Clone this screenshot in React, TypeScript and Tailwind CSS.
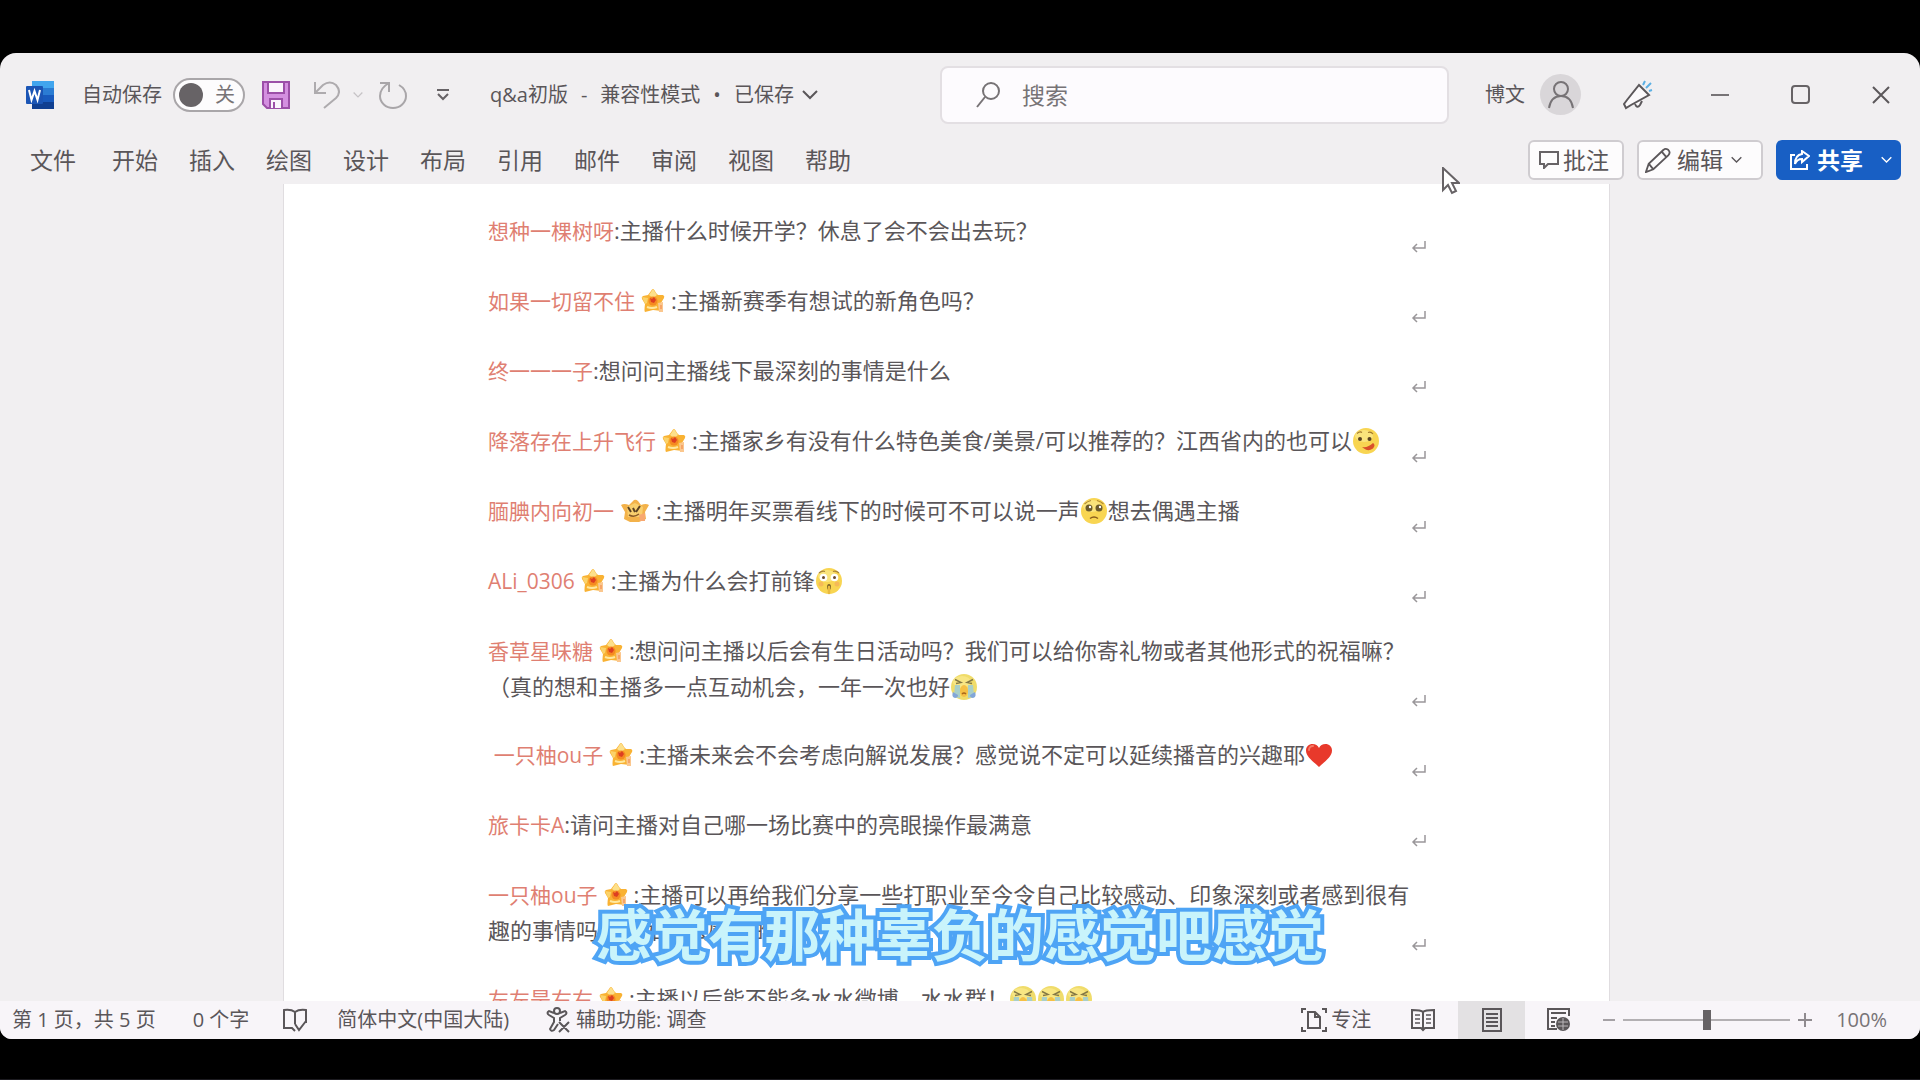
import type { ReactNode } from 'react'

type Face = 'lick' | 'plead' | 'hush' | 'sob' | 'heart'

type Question = {
  name: string
  badge?: 'star' | 'bear'
  lines: ReactNode[]
  indent?: boolean
}

const tabs = ['开始', '插入', '绘图', '设计', '布局', '引用', '邮件', '审阅', '视图', '帮助']

function Emoji({ face }: { face: Face }) {
  if (face === 'heart') {
    return (
      <svg viewBox="0 0 28 28" className="inline-block w-7 h-7 align-middle -mt-1" aria-hidden="true">
        <path d="M14 26C9 21 1 16 1 9.500C1 5.500 4 3 7.500 3C10.500 3 12.800 4.500 14 7C15.200 4.500 17.500 3 20.500 3C24 3 27 5.500 27 9.500C27 16 19 21 14 26Z" fill="#e8392b" />
        <path d="M4 9C4 6.500 6 5 8 5" stroke="#f47a66" strokeWidth="2" fill="none" strokeLinecap="round" />
      </svg>
    )
  }
  return (
    <svg viewBox="0 0 28 28" className="inline-block w-7 h-7 align-middle -mt-1" aria-hidden="true">
      <circle cx="14" cy="14" r="13" fill={face === 'sob' ? '#f0dc6a' : '#f8d552'} />
      <ellipse cx="12" cy="9" rx="9" ry="6" fill="#fbe98f" opacity="0.7" />
      {face === 'lick' && (
        <>
          <circle cx="8" cy="12" r="2" fill="#5a4322" />
          <circle cx="17.500" cy="12" r="2" fill="#5a4322" />
          <path d="M5 6.500Q8 4 10 5.500M16 5.500Q19 4.500 21 7" stroke="#a47a2c" strokeWidth="1.200" fill="none" />
          <path d="M10 20Q16 21 21 16Q24 18 21 21.500Q16 25 12 21.500Z" fill="#d9502a" />
        </>
      )}
      {face === 'plead' && (
        <>
          <path d="M4.500 7Q7 4.500 11 3.500M17 3.500Q21 4.500 23.500 7" stroke="#b08a35" strokeWidth="1.200" fill="none" />
          <circle cx="9" cy="11" r="3.500" fill="#6b5a2c" />
          <circle cx="19" cy="11" r="3.500" fill="#6b5a2c" />
          <circle cx="10" cy="10" r="1.200" fill="#fff" />
          <circle cx="20" cy="10" r="1.200" fill="#fff" />
          <path d="M10 21.500Q14 18.500 18 21.500" stroke="#8a5e1d" strokeWidth="1.500" fill="none" />
        </>
      )}
      {face === 'hush' && (
        <>
          <path d="M4 6Q7 3.500 10 4.500M18 4.500Q21 3.500 24 6" stroke="#a8843a" strokeWidth="1.200" fill="none" />
          <circle cx="8.500" cy="10.500" r="3.800" fill="#fff" />
          <circle cx="19.500" cy="10.500" r="3.800" fill="#fff" />
          <circle cx="8.500" cy="10.500" r="1.500" fill="#6b4a2a" />
          <circle cx="19.500" cy="10.500" r="1.500" fill="#6b4a2a" />
          <circle cx="6" cy="17" r="2.500" fill="#f4a65c" opacity="0.6" />
          <circle cx="22" cy="17" r="2.500" fill="#f4a65c" opacity="0.6" />
          <ellipse cx="14" cy="20" rx="2" ry="3" fill="#7c6428" />
          <path d="M14 20V26" stroke="#e9b93f" strokeWidth="2.500" strokeLinecap="round" />
        </>
      )}
      {face === 'sob' && (
        <>
          <path d="M5 6.500L11 9.500L6 10.500M23 6.500L17 9.500L22 10.500" stroke="#857945" strokeWidth="1.400" fill="none" />
          <path d="M5 12H10V25Q6 25 4 22Z" fill="#a9cfc8" />
          <path d="M23 12H18V25Q22 25 24 22Z" fill="#a9cfc8" />
          <path d="M3 19Q1 24 5 25Q8 25 8 22ZM25 19Q27 24 23 25Q20 25 20 22Z" fill="#82a6d8" />
          <ellipse cx="14" cy="18" rx="4" ry="6" fill="#f6c044" />
          <path d="M12 21Q14 19 16 21" stroke="#a9661c" strokeWidth="1.500" fill="none" />
        </>
      )}
    </svg>
  )
}

function Badge({ kind }: { kind: 'star' | 'bear' }) {
  if (kind === 'bear') {
    return (
      <svg viewBox="0 0 30 24" className="inline-block w-[30px] h-6 mx-1.5 align-middle -mt-1" aria-hidden="true">
        <path d="M1 6Q4 4 9 6L14 1Q16 0 18 2L21 6Q26 4 29 6L25 13L26 20L19 23H10L4 20L5 13Z" fill="#f3b24a" />
        <path d="M7 8L15 4L23 8L22 18H8Z" fill="#f9cf6d" />
        <path d="M8 8L11 13M13 9L15 13M20 7L16 13" stroke="#5c4223" strokeWidth="2" />
        <path d="M9 16Q14 19 19 15" stroke="#8a5a26" strokeWidth="1.500" fill="none" />
        <path d="M19 16L25 14V22L20 22Z" fill="#f8a870" />
      </svg>
    )
  }
  return (
    <svg viewBox="0 0 24 24" className="inline-block w-6 h-6 mx-1.5 align-middle -mt-1" aria-hidden="true">
      <path d="M12 0Q13 0 15 4L17 6L22 6Q24 7 23 9L20 14L21 22L12 21L4 23Q3 22 4 15L1 10Q0 8 2 7L7 6L10 2Q11 0 12 0Z" fill="#f9b233" />
      <path d="M12 0L16 6L12 9L8 6Z" fill="#fde08a" />
      <path d="M1 8L7 9L6 14L4 15Z" fill="#fbd26a" />
      <circle cx="12" cy="12" r="4.500" fill="#f58a22" />
      <path d="M9 9L11 10L13 8L15 11L13 14L10 13Z" fill="#dd3f22" />
      <path d="M6 18Q11 20 16 18" stroke="#ffe9a0" strokeWidth="2" fill="none" />
      <path d="M17 14L22 13V23H18Z" fill="#fbc78e" />
      <path d="M20 16V20" stroke="#f59a5b" strokeWidth="1.500" />
    </svg>
  )
}

const questions: Question[] = [
  { name: '想种一棵树呀', lines: ['主播什么时候开学？休息了会不会出去玩？'] },
  { name: '如果一切留不住', badge: 'star', lines: ['主播新赛季有想试的新角色吗？'] },
  { name: '终一一一子', lines: ['想问问主播线下最深刻的事情是什么'] },
  {
    name: '降落存在上升飞行',
    badge: 'star',
    lines: [<>主播家乡有没有什么特色美食/美景/可以推荐的？江西省内的也可以<Emoji face="lick" /></>],
  },
  {
    name: '腼腆内向初一',
    badge: 'bear',
    lines: [<>主播明年买票看线下的时候可不可以说一声<Emoji face="plead" />想去偶遇主播</>],
  },
  { name: 'ALi_0306', badge: 'star', lines: [<>主播为什么会打前锋<Emoji face="hush" /></>] },
  {
    name: '香草星味糖',
    badge: 'star',
    lines: [
      '想问问主播以后会有生日活动吗？我们可以给你寄礼物或者其他形式的祝福嘛？',
      <>（真的想和主播多一点互动机会，一年一次也好<Emoji face="sob" /></>,
    ],
  },
  {
    name: '一只柚ou子',
    badge: 'star',
    indent: true,
    lines: [<>主播未来会不会考虑向解说发展？感觉说不定可以延续播音的兴趣耶<Emoji face="heart" /></>],
  },
  { name: '旅卡卡A', lines: ['请问主播对自己哪一场比赛中的亮眼操作最满意'] },
  {
    name: '一只柚ou子',
    badge: 'star',
    lines: [
      '主播可以再给我们分享一些打职业至今令自己比较感动、印象深刻或者感到很有',
      '趣的事情吗？比如什么感动的人',
    ],
  },
  {
    name: '左左是右右',
    badge: 'star',
    lines: [
      <>主播以后能不能多水水微博、水水群！<Emoji face="sob" /><Emoji face="sob" /><Emoji face="sob" /></>,
    ],
  },
]

function Chevron({ className }: { className: string }) {
  return (
    <svg viewBox="0 0 16 10" className={className} fill="none" stroke="currentColor" strokeWidth="2" aria-hidden="true">
      <path d="M1 1L8 8L15 1" />
    </svg>
  )
}

function TitleBar() {
  return (
    <header className="flex items-center h-[83px] shrink-0 text-xl leading-7">
      <div className="flex items-center w-[940px] shrink-0 pl-[26px]">
        <svg viewBox="0 0 28 28" className="w-7 h-7" aria-label="Word" role="img">
          <path d="M6 0H28V8H6Z" fill="#41a5ee" />
          <path d="M6 7H28V14H6Z" fill="#2b7cd3" />
          <path d="M6 14H28V21H6Z" fill="#185abd" />
          <path d="M6 21H28V28H6Z" fill="#103f91" />
          <rect x="0" y="5" width="17" height="18" rx="1" fill="#1b55b5" />
          <path d="M3 9L5.500 19L8.500 10L11.500 19L14 9" fill="none" stroke="#fff" strokeWidth="2" />
        </svg>
        <label className="flex items-center ml-7">
          自动保存
          <input type="checkbox" className="sr-only" />
          <span className="flex items-center justify-between w-[72px] h-[34px] ml-[11px] pl-1 pr-2 rounded-full border-2 border-[#a9a6a9] bg-[#fdfcfd]">
            <span className="w-6 h-6 rounded-full bg-[#676366]" />
            <span className="text-[#777376]">关</span>
          </span>
        </label>
        <button className="ml-[17px]" aria-label="保存">
          <svg viewBox="0 0 28 28" className="w-7 h-7" fill="#d48fe0" stroke="#9c4fa8" strokeWidth="2">
            <path d="M1 1H27V27H5L1 23Z" />
            <path d="M6 1H22V12H6Z" fill="#fbf4fc" />
            <path d="M8 27V18H20V27" fill="#fbf4fc" />
            <path d="M12 27V21" />
          </svg>
        </button>
        <button className="ml-6 text-[#aeabae]" aria-label="撤消">
          <svg viewBox="0 0 26 28" className="w-[26px] h-7" fill="none" stroke="currentColor" strokeWidth="2">
            <path d="M1 1V12H12M1 12L9 4Q16 -1 22 4Q28 11 22 17L10 27" />
          </svg>
        </button>
        <button className="ml-[13px] text-[#c6c3c6]" aria-label="撤消选项">
          <Chevron className="w-2.5 h-2" />
        </button>
        <button className="ml-4 text-[#a9a6a9]" aria-label="重复">
          <svg viewBox="0 0 28 28" className="w-7 h-7" fill="none" stroke="currentColor" strokeWidth="2">
            <path d="M1 2H10V11M10 2Q1 7 1 15A13 12 0 0 0 27 15Q27 8 20 4" />
          </svg>
        </button>
        <button className="ml-[29px] text-[#676366]" aria-label="自定义快速访问工具栏">
          <svg viewBox="0 0 14 12" className="w-3.5 h-3" fill="none" stroke="currentColor" strokeWidth="2">
            <path d="M1 1H13M2 5L7 10L12 5" />
          </svg>
        </button>
        <button className="flex items-center gap-[13px] ml-10">
          <span>q&amp;a初版</span>
          <span>-</span>
          <span>兼容性模式</span>
          <span>•</span>
          <span className="flex items-center gap-2">已保存 <Chevron className="w-4 h-2.5" /></span>
        </button>
      </div>
      <label className="flex flex-1 items-center h-[58px] pl-[34px] rounded-lg border-2 border-[#e3dfe3] bg-[#fdfbfe] text-[#777376]">
        <svg viewBox="0 0 24 26" className="w-6 h-[26px] shrink-0" fill="none" stroke="currentColor" strokeWidth="2">
          <circle cx="15" cy="9" r="8" />
          <path d="M9 15L1 25" />
        </svg>
        <input
          type="text"
          placeholder="搜索"
          aria-label="搜索"
          className="flex-1 min-w-0 ml-[22px] text-[23px] bg-transparent outline-none placeholder:text-[#777376]"
        />
      </label>
      <div className="flex items-center justify-between w-[471px] shrink-0 pl-9 pr-[30px]">
        <button className="flex items-center gap-[15px]">
          博文
          <span className="flex justify-center items-center w-[41px] h-[41px] rounded-full bg-[#d9d6d9]">
            <svg viewBox="0 0 26 28" className="w-[26px] h-7" fill="none" stroke="#777376" strokeWidth="2">
              <circle cx="13" cy="8" r="7" />
              <path d="M1 27Q3 15 13 15Q23 15 25 27" />
            </svg>
          </span>
        </button>
        <button aria-label="即将推出的功能">
          <svg viewBox="0 0 30 30" className="w-[30px] h-[30px]" fill="#fbf9fb" stroke="#5b575a" strokeWidth="2">
            <path d="M12 24Q14 29 17 25L19 21" />
            <path d="M16 5L26 15L8 25L3 28L1 24L4 20Z" />
            <path d="M20 5L22 1M23 8L28 3M26 11L29 10" stroke="#5cb0e4" />
          </svg>
        </button>
        <span className="flex items-center gap-[62px] pl-4">
          <button aria-label="最小化" className="w-[18px] h-5 flex items-center">
            <span className="w-full border-t-2 border-[#777376]" />
          </button>
          <button aria-label="最大化" className="w-[19px] h-[19px] rounded-sm border-2 border-[#676366]" />
          <button aria-label="关闭">
            <svg viewBox="0 0 18 18" className="w-[18px] h-[18px]" stroke="#5b575a" strokeWidth="2">
              <path d="M1 1L17 17M17 1L1 17" />
            </svg>
          </button>
        </span>
      </div>
    </header>
  )
}

function Ribbon() {
  return (
    <nav className="flex items-center justify-between h-12 shrink-0 pl-[30px] pr-[19px] text-[23px] leading-8">
      <div className="flex items-center gap-[31px]">
        <button className="mr-[5px]">文件</button>
        {tabs.map((tab) => (
          <button key={tab}>{tab}</button>
        ))}
      </div>
      <div className="flex items-center gap-[13px]">
        <button className="flex items-center gap-1 w-24 h-10 pl-[9px] rounded-md border-2 border-[#cfccd0] bg-[#fdfcfd]">
          <svg viewBox="0 0 20 18" className="w-5 h-[18px]" fill="none" stroke="#676366" strokeWidth="2">
            <path d="M1 1H19V13H9L5 17V13H1Z" />
          </svg>
          批注
        </button>
        <button className="flex items-center gap-1.5 w-[126px] h-10 pl-1.5 rounded-md border-2 border-[#cfccd0] bg-[#fdfcfd]">
          <svg viewBox="0 0 28 28" className="w-[26px] h-[26px]" fill="none" stroke="#5b575a" strokeWidth="2">
            <path d="M1 27L4 18L20 3Q22 1 25 3Q28 6 25 9L9 24ZM4 18L9 24M18 5L23 11" />
          </svg>
          编辑
          <Chevron className="w-[11px] h-2 ml-0.5" />
        </button>
        <button className="flex items-center w-[125px] h-10 pl-3.5 rounded-md bg-[#185fc4] text-white font-bold">
          <svg viewBox="0 0 20 20" className="w-5 h-5" fill="none" stroke="currentColor" strokeWidth="2">
            <path d="M5 5H1V19H17V14" />
            <path d="M12 1L19 6L12 12V9Q7 9 5 14Q5 5 12 4Z" />
          </svg>
          <span className="ml-[7px]">共享</span>
          <Chevron className="w-[11px] h-2 ml-[18px]" />
        </button>
      </div>
    </nav>
  )
}

function Row({ question }: { question: Question }) {
  const { name, badge, lines, indent } = question
  return (
    <div className={`flex ${lines.length > 1 ? 'h-[104px]' : 'h-[70px]'}`}>
      <div className="flex-1 min-w-0 whitespace-nowrap">
        {lines.map((line, index) => (
          <p key={index} className="h-9">
            {index === 0 && (
              <>
                {indent && <>&nbsp;</>}
                <span className="text-[21px] text-[#df7f72]">{name}</span>
                {badge && <Badge kind={badge} />}:
              </>
            )}
            {line}
          </p>
        ))}
      </div>
      <svg viewBox="0 0 16 14" className="w-4 h-3.5 mb-7 self-end shrink-0" fill="none" stroke="#9a979a" strokeWidth="1.500" aria-hidden="true">
        <path d="M14 1V8H2M6 4L2 8L6 12" />
      </svg>
    </div>
  )
}

function StatusBar() {
  return (
    <footer className="flex items-center justify-between h-[38px] shrink-0 pl-3 pr-[33px] bg-[#f8f5f9] text-xl leading-7">
      <div className="flex items-center">
        <span>第 1 页，共 5 页</span>
        <span className="ml-[37px]">0 个字</span>
        <svg viewBox="0 0 24 24" className="w-6 h-6 ml-[34px]" fill="none" stroke="currentColor" strokeWidth="2" aria-hidden="true">
          <path d="M12 4Q8 1 1 2V20H9L12 23M12 4Q16 1 23 2V15M12 4V16M12 16L16 22L23 13" />
        </svg>
        <span className="ml-[30px]">简体中文(中国大陆)</span>
        <button className="flex items-center gap-1.5 ml-[37px]">
          <svg viewBox="0 0 24 26" className="w-6 h-[26px]" fill="none" stroke="currentColor" strokeWidth="2" aria-hidden="true">
            <circle cx="11" cy="4" r="3" />
            <path d="M8 6L3 4Q0 6 3 8L8 11V15L4 22Q5 25 8 23L12 17M14 6L19 4Q22 6 19 8L14 11V14M13 15L23 25M23 15L13 25" />
          </svg>
          辅助功能: 调查
        </button>
      </div>
      <div className="flex items-center h-full">
        <button className="flex items-center gap-1">
          <svg viewBox="0 0 26 26" className="w-[26px] h-[26px]" fill="none" stroke="currentColor" strokeWidth="2" aria-hidden="true">
            <path d="M1 6V2H5M21 2H25V6M1 20V24H5M21 24H25V20" />
            <path d="M7 5H14L19 10V21H7ZM14 5V10H19" />
          </svg>
          专注
        </button>
        <button className="ml-10" aria-label="阅读视图">
          <svg viewBox="0 0 24 24" className="w-6 h-6" fill="none" stroke="currentColor" strokeWidth="2">
            <path d="M12 4Q10 2 1 2V20H10L12 22L14 20H23V2Q14 2 12 4ZM12 4V22" />
            <path d="M4 7H9M4 11H9M4 15H9M15 7H20M15 11H20M15 15H20" strokeWidth="1.500" />
          </svg>
        </button>
        <button className="flex items-center justify-center w-[67px] h-full ml-[23px] bg-[#e3e1e3]" aria-label="页面视图">
          <svg viewBox="0 0 20 24" className="w-5 h-6" fill="none" stroke="currentColor" strokeWidth="2">
            <path d="M1 1H19V23H1Z" />
            <path d="M4 6H16M4 10H16M4 14H16M4 18H16" />
          </svg>
        </button>
        <button className="ml-[22px]" aria-label="Web 版式视图">
          <svg viewBox="0 0 24 24" className="w-6 h-6" fill="none" stroke="currentColor" strokeWidth="2">
            <path d="M22 8V1H1V21H10M4 5H19M4 10H10M4 14H8M4 18H8" />
            <circle cx="16" cy="16" r="7" fill="currentColor" stroke="none" />
            <path d="M16 10V22M11 14H21M11 18H21" stroke="#b9b5b9" strokeWidth="1" />
          </svg>
        </button>
        <button className="w-3 ml-8 border-t-2 border-[#a5a1a5]" aria-label="缩小" />
        <input
          type="range"
          defaultValue={50}
          aria-label="缩放"
          className="w-[167px] h-5 mx-2 appearance-none bg-transparent [&::-webkit-slider-runnable-track]:h-0.5 [&::-webkit-slider-runnable-track]:bg-[#b3b0b3] [&::-webkit-slider-thumb]:appearance-none [&::-webkit-slider-thumb]:w-2 [&::-webkit-slider-thumb]:h-5 [&::-webkit-slider-thumb]:-mt-[9px] [&::-webkit-slider-thumb]:bg-[#676366]"
        />
        <button aria-label="放大">
          <svg viewBox="0 0 14 14" className="w-3.5 h-3.5" stroke="#8f8b8f" strokeWidth="2">
            <path d="M7 0V14M0 7H14" />
          </svg>
        </button>
        <span className="ml-6 text-[#777376]">100%</span>
      </div>
    </footer>
  )
}

export default function App() {
  return (
    <div className="h-screen pt-[53px] pb-10 bg-black border-b border-[#1c1b20] font-['Open_Sans','Noto_Sans_CJK_SC',sans-serif] text-[#5a5659]">
      <div className="relative flex flex-col h-full overflow-hidden rounded-t-2xl rounded-b-xl bg-[#f1eff1]">
        <TitleBar />
        <Ribbon />
        <main className="flex-1 min-h-0 overflow-hidden pl-[283px] pr-[310px]">
          <article className="pl-[204px] pr-[182px] pt-7 bg-white border-x border-[#e0dde0] text-[22px] leading-9">
            {questions.map((question, index) => (
              <Row key={index} question={question} />
            ))}
          </article>
        </main>
        <StatusBar />
        <p className="absolute inset-x-0 bottom-[63px] text-center text-[56px] leading-[84px] font-bold text-[#c9f4fb] [-webkit-text-stroke:8px_#4ea4f5] [paint-order:stroke_fill]">
          感觉有那种辜负的感觉吧感觉
        </p>
        <svg viewBox="0 0 18 28" className="absolute left-[1442px] top-[114px] w-[18px] h-7" fill="#fff" stroke="#676366" strokeWidth="2" aria-hidden="true">
          <path d="M1 1V23L6 18L10 26L14 24L10 16H17Z" />
        </svg>
      </div>
    </div>
  )
}
